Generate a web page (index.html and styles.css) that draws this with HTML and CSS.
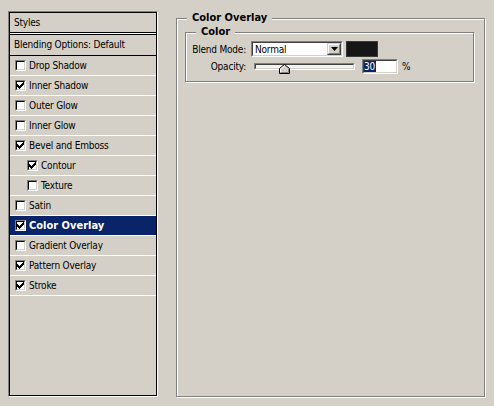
FILE: index.html
```html
<!DOCTYPE html>
<html>
<head>
<meta charset="utf-8">
<title>Layer Style</title>
<link rel="stylesheet" href="styles.css">
</head>
<body>
<div class="page">
  <div class="panel">
    <div class="panel-in">
      <div class="hdr">Styles</div>
      <div class="blend">Blending Options: Default</div>
      <div class="row"><span class="cb"><span class="cb-in"></span></span>Drop Shadow</div>
      <div class="row"><span class="cb"><span class="cb-in"><svg class="chk" width="7" height="7" viewBox="0 0 7 7"><path d="M0 2h1v1h1v1h1V3h1V2h1V1h1V0h1v3H6v1H5v1H4v1H3v1H2V6H1V5H0z"/></svg></span></span>Inner Shadow</div>
      <div class="row"><span class="cb"><span class="cb-in"></span></span>Outer Glow</div>
      <div class="row"><span class="cb"><span class="cb-in"></span></span>Inner Glow</div>
      <div class="row"><span class="cb"><span class="cb-in"><svg class="chk" width="7" height="7" viewBox="0 0 7 7"><path d="M0 2h1v1h1v1h1V3h1V2h1V1h1V0h1v3H6v1H5v1H4v1H3v1H2V6H1V5H0z"/></svg></span></span>Bevel and Emboss</div>
      <div class="row sub"><span class="cb"><span class="cb-in"><svg class="chk" width="7" height="7" viewBox="0 0 7 7"><path d="M0 2h1v1h1v1h1V3h1V2h1V1h1V0h1v3H6v1H5v1H4v1H3v1H2V6H1V5H0z"/></svg></span></span>Contour</div>
      <div class="row sub"><span class="cb"><span class="cb-in"></span></span>Texture</div>
      <div class="row"><span class="cb"><span class="cb-in"></span></span>Satin</div>
      <div class="row sel"><span class="cb"><span class="cb-in"><svg class="chk" width="7" height="7" viewBox="0 0 7 7"><path d="M0 2h1v1h1v1h1V3h1V2h1V1h1V0h1v3H6v1H5v1H4v1H3v1H2V6H1V5H0z"/></svg></span></span>Color Overlay</div>
      <div class="row"><span class="cb"><span class="cb-in"></span></span>Gradient Overlay</div>
      <div class="row"><span class="cb"><span class="cb-in"><svg class="chk" width="7" height="7" viewBox="0 0 7 7"><path d="M0 2h1v1h1v1h1V3h1V2h1V1h1V0h1v3H6v1H5v1H4v1H3v1H2V6H1V5H0z"/></svg></span></span>Pattern Overlay</div>
      <div class="row"><span class="cb"><span class="cb-in"><svg class="chk" width="7" height="7" viewBox="0 0 7 7"><path d="M0 2h1v1h1v1h1V3h1V2h1V1h1V0h1v3H6v1H5v1H4v1H3v1H2V6H1V5H0z"/></svg></span></span>Stroke</div>
    </div>
  </div>

  <div class="frame outer">
    <div class="legend legend-outer">Color Overlay</div>
    <div class="frame inner">
      <div class="legend legend-inner">Color</div>
      <div class="grid">
        <div class="lbl">Blend Mode:</div>
        <div class="ctl">
          <div class="select">
            <div class="select-in">
              <span class="sel-text">Normal</span>
              <span class="drop"><span class="drop-in"><svg width="7" height="4" viewBox="0 0 7 4"><path d="M0 0h7L3.5 4z"/></svg></span></span>
            </div>
          </div>
          <div class="swatch"></div>
        </div>
        <div class="lbl">Opacity:</div>
        <div class="ctl">
          <div class="track">
            <div class="track-in"></div>
            <svg class="thumb" width="11" height="10" viewBox="0 0 11 10">
              <path d="M0.5 9.5V4.5L5.5 0.5L10.5 4.5V9.5Z" fill="#d4d0c8" stroke="#000"/>
              <path d="M1.5 8.5V5L5.5 1.8" fill="none" stroke="#fff"/>
              <path d="M1.5 8.5H9.5V5" fill="none" stroke="#808080"/>
            </svg>
          </div>
          <div class="field"><div class="field-in"><span class="hl">30</span></div></div>
          <span class="pct">%</span>
        </div>
      </div>
    </div>
  </div>
</div>
</body>
</html>
```
FILE: styles.css
```css
html, body {
  margin: 0;
  padding: 0;
  background: #d4d0c8;
}
body {
  font-family: "DejaVu Sans Condensed", "DejaVu Sans", sans-serif;
  font-size: 10px;
  letter-spacing: -0.2px;
  color: #000;
}
.page {
  display: flex;
  align-items: flex-start;
  width: 494px;
  height: 406px;
  overflow: hidden;
}

/* left styles list */
.panel {
  margin: 11px 0 0 8px;
  width: 150px;
  height: 386px;
  box-sizing: border-box;
  border-style: solid;
  border-width: 1px;
  border-color: #808080 #fff #fff #808080;
}
.panel-in {
  height: 100%;
  box-sizing: border-box;
  border: 1px solid #000;
}
.hdr {
  height: 19px;
  line-height: 19px;
  padding-left: 4px;
  border-bottom: 1px solid #000;
  box-shadow: 0 1px 0 #fff;
  margin-bottom: 1px;
}
.blend {
  height: 20px;
  line-height: 20px;
  padding-left: 4px;
  border-top: 1px solid #000;
  border-bottom: 1px solid #000;
}
.row {
  height: 19px;
  display: flex;
  align-items: center;
  padding-left: 5px;
  border-bottom: 1px solid #fff;
  white-space: nowrap;
}
.row.sub {
  padding-left: 17px;
}
.row.sel {
  background: #0a246a;
  color: #fff;
  font-weight: bold;
  font-size: 11px;
  letter-spacing: 0;
}
.cb {
  width: 11px;
  height: 11px;
  box-sizing: border-box;
  flex: none;
  margin-right: 3px;
  border-style: solid;
  border-width: 1px;
  border-color: #808080 #fff #fff #808080;
  margin-top: -1px;
}
.cb-in {
  display: flex;
  align-items: center;
  justify-content: center;
  width: 100%;
  height: 100%;
  box-sizing: border-box;
  border-style: solid;
  border-width: 1px;
  border-color: #000 #d4d0c8 #d4d0c8 #000;
  background: #fff;
}
.chk {
  display: block;
  fill: #000;
}

/* right side frames */
.frame {
  box-sizing: border-box;
  border: 1px solid #808080;
  box-shadow: inset 1px 1px 0 #fff, 1px 1px 0 #fff;
}
.outer {
  margin: 18px 0 0 18px;
  width: 309px;
  height: 379px;
  padding: 0 10px 0 8px;
}
.inner {
  margin-top: 7px;
  height: 50px;
}
.legend {
  width: fit-content;
  height: 14px;
  line-height: 14px;
  margin-top: -8px;
  padding: 0 5px;
  background: #d4d0c8;
  font-weight: bold;
  font-size: 11px;
  letter-spacing: 0;
  white-space: nowrap;
}
.legend-outer {
  margin-left: 2px;
}
.legend-inner {
  margin-left: 10px;
}
.grid {
  display: grid;
  grid-template-columns: 60px auto;
  grid-template-rows: 16px 15px;
  column-gap: 5px;
  row-gap: 2px;
  margin-top: 2px;
}
.lbl {
  text-align: right;
  white-space: nowrap;
  align-self: center;
}
.ctl {
  display: flex;
  align-items: center;
}

/* select */
.select {
  width: 92px;
  height: 16px;
  box-sizing: border-box;
  border-style: solid;
  border-width: 1px;
  border-color: #808080 #fff #fff #808080;
}
.select-in {
  height: 100%;
  box-sizing: border-box;
  border-style: solid;
  border-width: 1px;
  border-color: #404040 #d4d0c8 #d4d0c8 #404040;
  background: #fff;
  display: flex;
  align-items: center;
}
.sel-text {
  flex: 1;
  padding-left: 2px;
}
.drop {
  width: 14px;
  height: 12px;
  box-sizing: border-box;
  border-style: solid;
  border-width: 1px;
  border-color: #d4d0c8 #404040 #404040 #d4d0c8;
  background: #d4d0c8;
}
.drop-in {
  display: flex;
  align-items: center;
  justify-content: center;
  height: 100%;
  box-sizing: border-box;
  border-style: solid;
  border-width: 1px;
  border-color: #fff #808080 #808080 #fff;
}
.drop-in svg {
  display: block;
  fill: #000;
}
.swatch {
  width: 32px;
  height: 16px;
  box-sizing: border-box;
  margin-left: 3px;
  background: #161616;
  border: 1px solid #3a3a3a;
}

/* slider */
.track {
  position: relative;
  width: 101px;
  height: 7px;
  margin-left: 3px;
  box-sizing: border-box;
  border-style: solid;
  border-width: 1px;
  border-color: #808080 #fff #fff #808080;
}
.track-in {
  height: 100%;
  box-sizing: border-box;
  border-style: solid;
  border-width: 1px;
  border-color: #404040 #d4d0c8 #d4d0c8 #404040;
  background: #f4f3ee;
}
.thumb {
  position: absolute;
  left: 24px;
  top: 0px;
  display: block;
}
.field {
  width: 36px;
  height: 15px;
  box-sizing: border-box;
  margin-left: 7px;
  border-style: solid;
  border-width: 1px;
  border-color: #808080 #fff #fff #808080;
}
.field-in {
  height: 100%;
  box-sizing: border-box;
  border-style: solid;
  border-width: 1px;
  border-color: #404040 #d4d0c8 #d4d0c8 #404040;
  background: #fff;
  display: flex;
  align-items: center;
}
.hl {
  background: #0a246a;
  color: #fff;
  line-height: 11px;
  padding: 0 1px 0 0;
}
.pct {
  margin-left: 4px;
}
```
